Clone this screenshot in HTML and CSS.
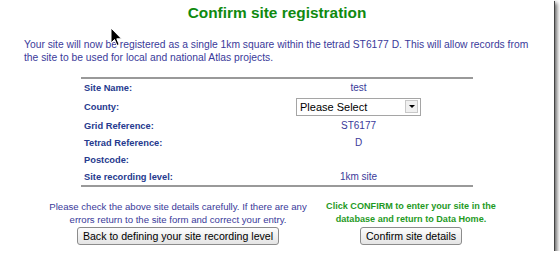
FILE: index.html
```html
<!DOCTYPE html>
<html lang="en">
<head>
	<meta charset="UTF-8">
	<title>Confirm site registration</title>
	<link rel="stylesheet" href="styles.css">
</head>
<body>

	<div class="frame">
		<h1 class="titulo">Confirm site registration</h1>
		<p class="intro">Your site will now be registered as a single 1km square within the tetrad ST6177 D. This will allow records from the site to be used for local and national Atlas projects.</p>

		<div class="detalles">
			<div class="fila">
				<span class="etiqueta">Site Name:</span>
				<span class="valor">test</span>
			</div>
			<div class="fila fila-alta">
				<span class="etiqueta">County:</span>
				<span class="valor">
					<span class="selector">
						<span class="selector-texto">Please Select</span>
						<span class="selector-flecha"></span>
					</span>
				</span>
			</div>
			<div class="fila">
				<span class="etiqueta">Grid Reference:</span>
				<span class="valor">ST6177</span>
			</div>
			<div class="fila">
				<span class="etiqueta">Tetrad Reference:</span>
				<span class="valor">D</span>
			</div>
			<div class="fila">
				<span class="etiqueta">Postcode:</span>
				<span class="valor"></span>
			</div>
			<div class="fila">
				<span class="etiqueta">Site recording level:</span>
				<span class="valor">1km site</span>
			</div>
		</div>

		<div class="acciones">
			<div class="accion accion-izq">
				<p class="aviso">Please check the above site details carefully. If there are any errors return to the site form and correct your entry.</p>
				<button class="boton">Back to defining your site recording level</button>
			</div>
			<div class="accion accion-der">
				<p class="aviso aviso-verde">Click CONFIRM to enter your site in the database and return to Data Home.</p>
				<button class="boton">Confirm site details</button>
			</div>
		</div>

		<svg class="cursor" width="13" height="20" viewBox="0 0 13 20">
			<path d="M1 1 L1 16 L4.5 12.5 L7 18.5 L9.2 17.5 L6.8 11.8 L11.5 11.8 Z" fill="#000" stroke="#fff" stroke-width="1"/>
		</svg>
	</div>

</body>
</html>
```

FILE: styles.css
```css
body{
	margin: 0;
	padding: 0;
	background: #fff;
	font-family: "Liberation Sans", Arial, sans-serif;
}

.frame{
	position: relative;
	box-sizing: border-box;
	width: 554px;
	height: 251px;
	background: #fff;
	box-shadow: 1px 1px 0 #444, 3px 3px 4px rgba(0,0,0,0.6);
	padding-top: 3px;
}

.titulo{
	margin: 0;
	text-align: center;
	font-size: 15.4px;
	line-height: 19px;
	color: #0f8a0f;
}

.intro{
	margin: 16px 0 0 0;
	padding: 0 18px 0 24px;
	font-size: 10.3px;
	line-height: 13px;
	color: #3a3a9a;
}

.detalles{
	width: 392px;
	margin: 13px auto 0 auto;
	border-top: 2px solid #999;
	border-bottom: 2px solid #999;
	display: flex;
	flex-direction: column;
}

.fila{
	display: flex;
	align-items: center;
	height: 17px;
}

.fila-alta{
	height: 21px;
}

.etiqueta{
	width: 160px;
	padding-left: 3px;
	font-size: 9.3px;
	font-weight: bold;
	color: #263a8e;
}

.valor{
	flex: 1;
	text-align: center;
	font-size: 10px;
	color: #3a3a9a;
}

.selector{
	box-sizing: border-box;
	display: inline-flex;
	align-items: center;
	justify-content: space-between;
	width: 125px;
	height: 18px;
	border: 1px solid #a5a5a5;
	background: #fff;
	text-align: left;
}

.selector-texto{
	padding-left: 3px;
	font-size: 11px;
	color: #000;
}

.selector-flecha{
	box-sizing: border-box;
	width: 13px;
	height: 13px;
	margin-right: 2px;
	border: 1px solid #c8c8c8;
	background: #f0f0f0;
	display: flex;
	align-items: center;
	justify-content: center;
}

.selector-flecha::after{
	content: "";
	border-left: 3px solid transparent;
	border-right: 3px solid transparent;
	border-top: 3px solid #000;
}

.acciones{
	display: grid;
	grid-template-columns: 276px 190px;
	margin: 13px 0 0 40px;
}

.accion{
	display: flex;
	flex-direction: column;
	align-items: center;
}

.aviso{
	margin: 0;
	text-align: center;
	font-size: 9.6px;
	line-height: 13px;
	color: #3a3a9a;
}

.aviso-verde{
	font-size: 9.1px;
	font-weight: bold;
	color: #1f9a1f;
}

.boton{
	margin-top: 1px;
	height: 18px;
	padding: 0 5px;
	font-family: "Liberation Sans", Arial, sans-serif;
	font-size: 10.6px;
	color: #000;
	border: 1px solid #8c8c8c;
	border-radius: 3px;
	background: linear-gradient(#fdfdfd, #e4e4e4);
}

.cursor{
	position: absolute;
	left: 110px;
	top: 27px;
}
```
